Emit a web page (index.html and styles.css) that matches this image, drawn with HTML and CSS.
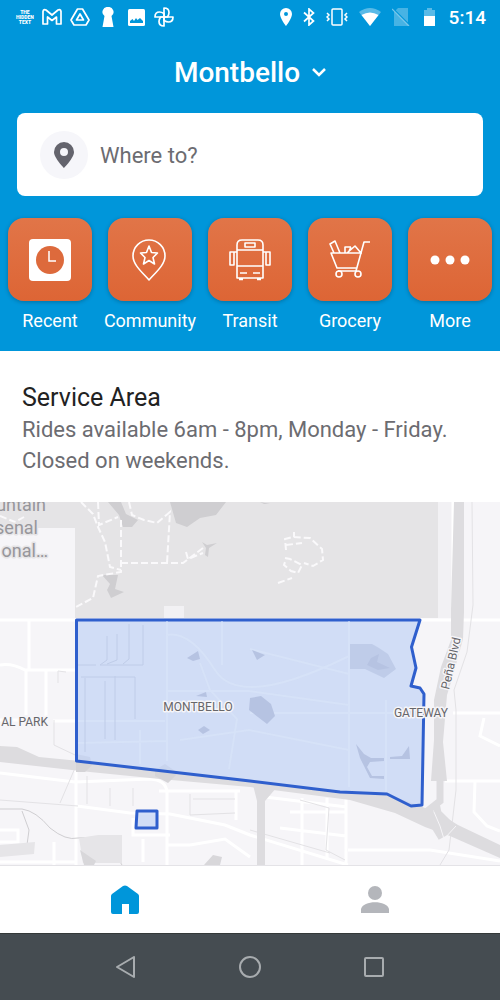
FILE: index.html
```html
<!DOCTYPE html>
<html lang="en">
<head>
    <meta charset="UTF-8">
    <meta name="viewport" content="width=device-width, initial-scale=1.0">
    <title>Montbello Rides</title>
    <link rel="stylesheet" href="styles.css">
</head>
<body>
    <header class="hero">
        <div class="status-bar">
            <div class="status-left">
                <div class="badge-text">THE<br>HIDDEN<br>TEXT</div>
                <svg width="20" height="18" viewBox="0 0 20 18" fill="none" stroke="currentColor" stroke-width="1.700" stroke-linejoin="round"><path d="M1 16V3.500Q1.500 1 4 2L10 7L16 2Q18.500 1 19 3.500V16H14.500V9L10 12.500L5.500 9V16Z"/></svg>
                <svg width="20" height="18" viewBox="0 0 20 18" fill="none" stroke="currentColor" stroke-width="1.700" stroke-linejoin="round"><path d="M7.500 1H12.500L19 12L16 17H4L1 12Z"/><path d="M10 6L13.500 12H6.500Z"/></svg>
                <svg class="keyhole-icon" width="12" height="20" viewBox="0 0 12 20" fill="currentColor"><path d="M6 0A5 5 0 0 1 9.500 9L11.500 20H.5L2.500 9A5 5 0 0 1 6 0Z"/></svg>
                <svg class="photo-icon" width="17" height="17" viewBox="0 0 17 17"><rect width="17" height="17" rx="1.500" fill="currentColor"/><path d="M2 14V12L4.500 10L6 12L8 9L9.500 11L12 9L15 12V14Z" fill="#0096da"/></svg>
                <svg width="20" height="20" viewBox="0 0 20 20" fill="none" stroke="currentColor" stroke-width="1.700" stroke-linejoin="round"><path id="blade" d="M10 10V1Q15 1 15 5.500Q15 7.500 13.500 10Z"/><use href="#blade" transform="rotate(90 10 10)"/><use href="#blade" transform="rotate(180 10 10)"/><use href="#blade" transform="rotate(270 10 10)"/></svg>
            </div>
            <div class="status-right">
                <svg width="12" height="18" viewBox="0 0 12 18" fill="currentColor" fill-rule="evenodd"><path d="M6 0A6 6 0 0 1 12 6C12 10.500 6 18 6 18S0 10.500 0 6A6 6 0 0 1 6 0ZM6 4A2 2 0 1 0 6 8A2 2 0 1 0 6 4Z"/></svg>
                <svg width="12" height="18" viewBox="0 0 12 18" fill="none" stroke="currentColor" stroke-width="1.700"><path d="M1 4.500L10.500 13L6 17V1L10.500 5L1 13.500"/></svg>
                <svg width="22" height="18" viewBox="0 0 22 18" fill="none" stroke="currentColor" stroke-width="1.500"><rect x="6" y="1" width="10" height="16" rx="1"/><path d="M1 5L3 7L1 9L3 11L1 13M21 5L19 7L21 9L19 11L21 13"/></svg>
                <svg width="22" height="18" viewBox="0 0 22 18" fill="currentColor"><path opacity=".35" d="M11 18L0 4Q11-4 22 4Z"/><path d="M11 18L2.500 7Q11 2 19.500 7Z"/></svg>
                <svg width="18" height="18" viewBox="0 0 18 18"><path d="M6 0H16V18H2V4Z" fill="currentColor" opacity=".28"/><path d="M1 1L18 18" stroke="#0096da" stroke-width="2"/><path d="M0 1L17 18" stroke="currentColor" stroke-width="1.200" opacity=".45"/></svg>
                <svg class="battery" width="11" height="18" viewBox="0 0 11 18" fill="currentColor"><path opacity=".35" d="M0 2H3V0H8V2H11V8H0Z"/><path d="M0 8H11V18H0Z"/></svg>
                <time>5:14</time>
            </div>
        </div>

        <h1>
            <button class="city" type="button">Montbello
                <svg width="14" height="10" viewBox="0 0 14 10" fill="none" stroke="currentColor" stroke-width="2.500"><path d="M1 1L7 7L13 1"/></svg>
            </button>
        </h1>

        <div class="search">
            <label for="destination" aria-label="Destination">
                <svg width="20" height="26" viewBox="0 0 20 26" fill="currentColor" fill-rule="evenodd"><path d="M10 0A10 10 0 0 1 20 10C20 16 10 26 10 26S0 16 0 10A10 10 0 0 1 10 0ZM10 6A4 4 0 1 0 10 14A4 4 0 1 0 10 6Z"/></svg>
            </label>
            <input id="destination" type="text" placeholder="Where to?" autocomplete="off">
        </div>

        <nav class="categories" aria-label="Categories">
            <button type="button">
                <span class="tile"><svg width="42" height="42" viewBox="0 0 42 42"><rect width="42" height="42" rx="4" fill="#fff"/><circle cx="21" cy="21" r="14" fill="#dd6a3c"/><path d="M20 12V22H27" fill="none" stroke="#fff" stroke-width="1.500"/></svg></span>
                <span>Recent</span>
            </button>
            <button type="button">
                <span class="tile"><svg width="42" height="42" viewBox="0 0 42 42" fill="none" stroke="#fff" stroke-width="1.600" stroke-linejoin="round"><path d="M20 41C14 34 4 26 4 17A16 16 0 0 1 36 17C36 26 26 34 20 41Z"/><path d="M20 7L22.500 13.500L28.500 14L24 18.500L25.500 25L20 21.500L14.500 25L16 18.500L11.500 14L17.500 13.500Z"/></svg></span>
                <span>Community</span>
            </button>
            <button type="button">
                <span class="tile"><svg width="42" height="42" viewBox="0 0 42 42" fill="none" stroke="#fff" stroke-width="1.600" stroke-linejoin="round"><path d="M8 39V6Q8 1 13 1H29Q34 1 34 6V39ZM8 11H34M8 27H34M8 13H1V26H5V13M34 13H41V26H37V13M16 4H26V8H16ZM11 34H18M24 34H31M10 40.500H14M28 40.500H32"/></svg></span>
                <span>Transit</span>
            </button>
            <button type="button">
                <span class="tile"><svg width="42" height="42" viewBox="0 0 42 42" fill="none" stroke="#fff" stroke-width="1.600" stroke-linejoin="round"><path d="M41 3H35L27 32H9M33 14H2L8 29H28M5 14L1 5L6 2L11 14M16 14V8H22M18 14L26 7L32 14M22 8L20 12"/><circle cx="10" cy="35" r="3"/><circle cx="29" cy="35" r="3"/></svg></span>
                <span>Grocery</span>
            </button>
            <button type="button">
                <span class="tile"><svg width="42" height="42" viewBox="0 0 42 42" fill="#fff"><circle cx="6" cy="21" r="4.500"/><circle cx="21" cy="21" r="4.500"/><circle cx="36" cy="21" r="4.500"/></svg></span>
                <span>More</span>
            </button>
        </nav>
    </header>

    <section class="service">
        <h2>Service Area</h2>
        <p>Rides available 6am - 8pm, Monday - Friday. Closed on weekends.</p>
    </section>

    <main class="map">
        <svg viewBox="0 502 500 363" preserveAspectRatio="xMidYMid slice" role="img" aria-label="Service area map">
            <!-- refuge land -->
            <path d="M0 502H438V618H75V528H0Z" fill="#e5e4e6"/>
            <path d="M438 502H453V618H438ZM164 606H184V620H164Z" fill="#f2f1f4"/>
            <g fill="#cfced1">
                <path d="M108 502H121L126 514L138 520L132 527H123L119 515Z"/>
                <path d="M421 502" />
                <path d="M170 502H226L216 515L200 518L187 527L176 523Z"/>
                <path d="M102 575H118L115 589L124 592L111 598L107 590L110 584Z"/>
                <path d="M202 542L207 545L217 543L209 548L208 557L205 555L206 548ZM260 502L270 504L264 504Z"/>
            </g>
            <g fill="none" stroke="#faf9fb" stroke-width="2" stroke-dasharray="7 3">
                <path d="M81 502L93 514L98 527L105 542L110 567L121 570M98 502L99 525L118 517M121 520V572L98 576L93 598L76 607"/>
                <path d="M129 502L132 515L144 520L157 523L170 512L167 563M121 563H183L203 548M186 552L188 559L203 553"/>
                <path d="M294 532V537M286 550L285 539L293 537L310 538L322 549L323 560L313 566L304 563M285 558L290 559L302 565L298 573L291 571L284 565L286 559M286 545L302 543M278 583L292 578"/>
                <path d="M0 516L15 522L24 517"/>
            </g>

            <!-- minor streets -->
            <g fill="none" stroke="#fff" stroke-width="3">
                <path d="M0 620H76M420 620H500M0 665Q12 663 25 670H76M29 620V669M26 671V715M46 671V720H0M53 721H76"/>
                <path d="M0 773L75 782L150 779Q166 780 167 792V865M76 760V865M0 830H18V842H0M77 806L130 813L170 814L225 825L250 835L348 865M133 818V835H170M0 862H76M54 842V865"/>
                <path d="M159 791H240M236 792V820M190 845L225 839L250 857M166 845H190M143 839V862M302 798V865M327 798V858M346 798V865M265 797L347 807M290 812H347M280 828L346 836M348 850H430L500 861"/>
                <path d="M453 713H500M445 781H500M484 718L480 736L500 746M475 781L474 812L487 826L500 831M453 502V660"/>
            </g>
            <g fill="none" stroke="#e3e2e5" stroke-width="1">
                <path d="M472 502L473 605L467 652L454 690L456 710V790L449 850L440 865M54 720L54 745L75 755M0 800L78 806M87 804V776M110 788V806M133 788V806M60 803L75 768M190 794V815L235 813M193 799H235M300 800L329 808L326 850L345 860M250 830L330 853M58 683V671L66 672"/>
            </g>
            <path d="M0 809H22Q36 811 50 828Q66 841 78 838L98 837L114 852L122 865M22 811L29 830L27 845" fill="none" stroke="#cfced1" stroke-width="1"/>
            <path d="M79 838L98 835H122V863H83ZM0 845L35 842L34 854L0 857Z" fill="#e6e5e8"/>
            <path d="M80 850L96 861L94 865H84ZM204 865L213 855L222 857L220 865Z" fill="#d8d7da"/>

            <!-- highways -->
            <path d="M0 746L17 747L39 757L90 762L164 770L250 781L340 793L390 795L420 806L440 814L458 825L500 845V858L450 836L425 827L395 813L350 800L250 787L160 779L90 772L0 762Z" fill="#dddcdf"/>
            <path d="M76 754L90 757L92 765L85 772H76ZM155 770L165 764L178 773L168 783L155 776Z" fill="#d5d4d7"/>
            <path d="M253 785L277 787L265 801V865H257V801Z" fill="#dddcdf"/>
            <path d="M454 502H464V612L463 639L452 679L447 695L443 742L447 781H431L434 740V700L441 667L451 640V610Z" fill="#dddcdf"/>
            <path d="M440 780V801L426 812L440 835L453 828L438 813L436 803" fill="none" stroke="#dddcdf" stroke-width="7"/>
            <path d="M434 812L440 826L444 839L456 826" fill="none" stroke="#f6f5f8" stroke-width="1"/>

            <!-- service zone -->
            <g fill="#c3d4f5" fill-opacity=".74" stroke="#2f5fcd" stroke-width="3" stroke-linejoin="round">
                <path d="M76.500 620H420L411.500 647L416 668L411 686L420 688L424 694L422 805L411 806L387 794L340 792L250 781L76.500 761Z"/>
                <path d="M137 811H157V828H136Z"/>
            </g>
            <g fill="none" stroke="#dce7fa" stroke-width="2" opacity=".5">
                <path d="M167 621V761M222 621V665M349 621V787M78 721H165M78 743L167 741M166 635Q190 630 215 670T349 656M167 691H249L349 705M250 649L349 674M250 713H410M180 740L249 730L349 750M200 663L210 690L237 719L229 769M386 700V792M140 730V764"/>
            </g>
            <g fill="none" stroke="#bfcce8" stroke-width="1">
                <path d="M107 636V660L100 665H143V625M117 634V660L107 664M129 624V659L123 664M78 665H96M81 677H135V719M85 678V752M105 681V739M115 676V740"/>
            </g>
            <g fill="#b6c3e2">
                <path d="M187 658L198 651L200 659L193 661ZM252 650L265 655L257 660ZM196 696L206 692L207 697ZM198 730L204 726L210 730L203 734ZM250 698L261 696L271 704L275 716L267 724L249 710Z"/>
                <path opacity=".65" d="M350 644H372L379 648L388 654L396 669L384 678L365 669H350Z"/>
                <path d="M371 658L379 654L377 662L390 668L378 670L367 665Z"/>
                <path d="M356 744L364 754L371 758H384V761L370 762L367 767L372 776H384V779L370 778L364 766L360 758ZM390 757L402 756L409 746L410 759H390Z"/>
            </g>

            <g class="map-labels">
                <text x="46" y="511" class="park">untain</text>
                <text x="38" y="534" class="park">senal</text>
                <text x="48" y="557" class="park">onal…</text>
                <text x="48" y="726" text-anchor="end">AL PARK</text>
                <text x="198" y="711" text-anchor="middle">MONTBELLO</text>
                <text x="421" y="717" text-anchor="middle">GATEWAY</text>
                <text transform="translate(449 690) rotate(-77)">Peña Blvd</text>
            </g>
        </svg>
    </main>

    <nav class="tabs" aria-label="Main">
        <a class="active" href="#home" aria-label="Home"><svg width="28" height="30" viewBox="0 0 28 30" fill="currentColor"><path d="M12 1Q14 0 16 1L27 9Q28 10 28 11V27Q28 29 26 29H18V19H11V29H2Q0 29 0 27V11Q0 10 1 9Z"/></svg></a>
        <a href="#account" aria-label="Account"><svg width="28" height="30" viewBox="0 0 28 30" fill="currentColor"><circle cx="14" cy="8" r="7"/><path d="M0 28V24C2 15 26 15 28 24V28Z"/></svg></a>
    </nav>

    <footer class="system-bar">
        <button type="button" aria-label="Back"><svg width="22" height="22" viewBox="0 0 22 22"><path d="M19 1V21L2 11Z"/></svg></button>
        <button type="button" aria-label="Home screen"><svg width="22" height="22" viewBox="0 0 22 22"><circle cx="11" cy="11" r="10"/></svg></button>
        <button type="button" aria-label="Recent apps"><svg width="22" height="22" viewBox="0 0 22 22"><rect x="2" y="2" width="18" height="18" rx="1"/></svg></button>
    </footer>
</body>
</html>
```
FILE: styles.css
```css
:root {
    --blue: #0096da;
    --orange: #dd6535;
    --grey: #6c6c71;
}
* { box-sizing: border-box; margin: 0; padding: 0; }
body {
    font-family: Roboto, "Liberation Sans", sans-serif;
    background: #fff;
    min-height: 100vh; display: flex; flex-direction: column;
}
button { background: none; border: none; font: inherit; color: inherit; cursor: pointer; }
svg { display: block; flex: none; }

.hero { background: var(--blue); color: #fff; padding-bottom: 19px; }
.status-bar {
    display: flex; justify-content: space-between; align-items: center;
    height: 34px; padding: 0 14px 0 16px;
}
.status-left { display: flex; align-items: center; gap: 8px; }
.status-right { display: flex; align-items: center; gap: 11px; }
.badge-text { font-size: 5px; line-height: 5px; font-weight: 900; text-align: center; }
.keyhole-icon { margin: 0 4px; }
.photo-icon { margin: 0 1px 0 2px; }
.battery { margin: 0 3px; }
time { font-size: 19px; font-weight: 500; }

h1 { text-align: center; font-weight: 500; font-size: 28px; line-height: 32px; padding-top: 23px; }
.city { display: inline-flex; align-items: center; gap: 12px; }

.search {
    display: flex; align-items: center; gap: 12px;
    height: 83px; margin: 24px 17px 22px; padding: 0 23px;
    background: #fff; border-radius: 8px;
}
.search label {
    display: flex; align-items: center; justify-content: center; flex: none;
    width: 48px; height: 48px; border-radius: 50%;
    background: #f6f6fa; color: #64646d;
}
.search input {
    flex: 1; min-width: 0; padding-top: 2px; border: none; outline: none;
    font: inherit; font-size: 22px; color: #222;
}
.search input::placeholder { color: var(--grey); opacity: 1; }

.categories { display: grid; grid-template-columns: repeat(5, 1fr); }
.categories button {
    display: flex; flex-direction: column; align-items: center; gap: 8px;
    font-size: 18px; line-height: 23px;
}
.tile {
    display: flex; align-items: center; justify-content: center;
    width: 84px; height: 83px; border-radius: 16px;
    background: linear-gradient(#e17548, var(--orange));
    box-shadow: 0 1px 4px rgba(0, 0, 0, 0.25);
}

.service { padding: 31px 22px 26px; color: var(--grey); }
h2 { font-size: 25px; line-height: 32px; font-weight: 400; color: #222; }
.service p { font-size: 22px; line-height: 31px; }

.map { flex: 1 0 363px; position: relative; overflow: hidden; background: #f6f5f8; }
.map > svg { position: absolute; width: 100%; height: 100%; }
.map-labels text {
    font-size: 12px; fill: #66666a;
    stroke: #f6f5f8; stroke-width: 3px; stroke-linejoin: round; paint-order: stroke;
}
.map-labels .park { font-size: 18px; fill: #97969b; stroke: #e5e4e6; text-anchor: end; }

.tabs { display: grid; grid-template-columns: 1fr 1fr; height: 68px; border-top: 1px solid #e4e3e7; }
.tabs a { display: flex; align-items: center; justify-content: center; color: #b4b6bb; }
.tabs .active { color: var(--blue); }

.system-bar {
    display: flex; justify-content: center; gap: 102px;
    height: 67px; background: #454c51; border-top: 1px solid #343939;
}
.system-bar svg { fill: none; stroke: #a8acaf; stroke-width: 2px; stroke-linejoin: round; }
```
